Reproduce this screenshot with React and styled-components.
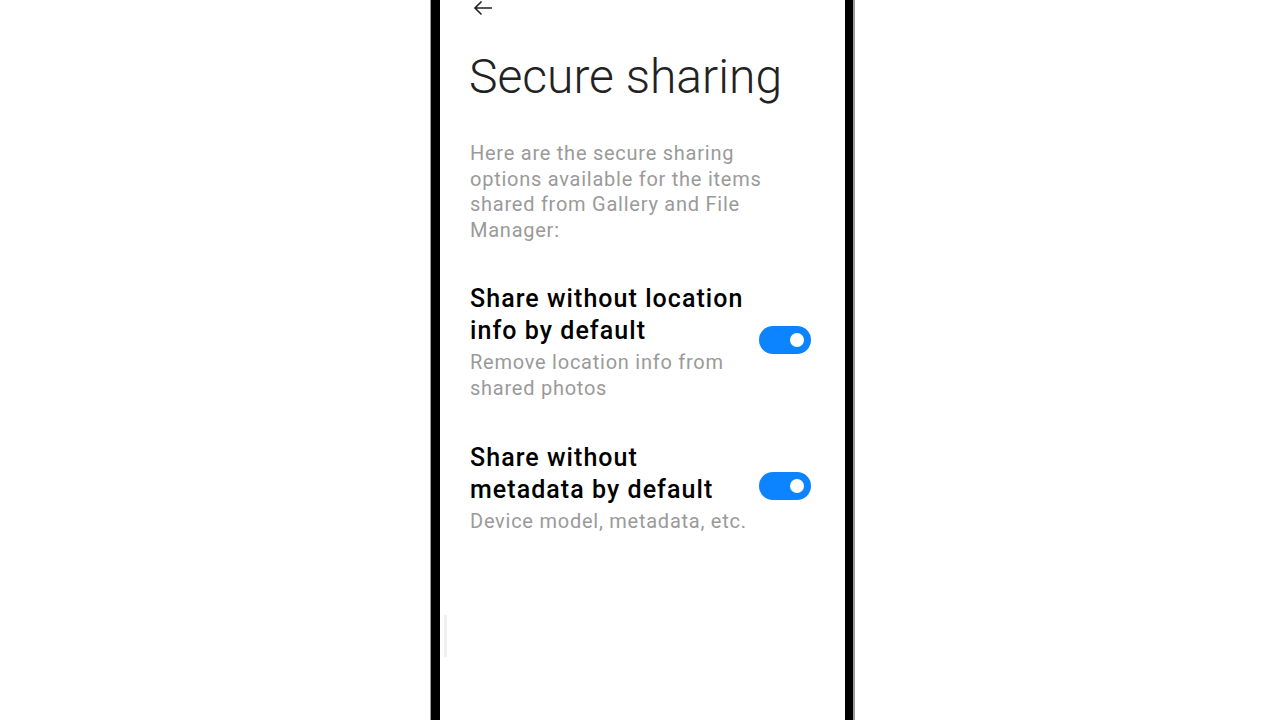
import React from 'react';
import styled, { createGlobalStyle } from 'styled-components';

const GlobalStyle = createGlobalStyle`
  html, body {
    margin: 0;
    padding: 0;
    background: #ffffff;
    font-family: Roboto, "Noto Sans", sans-serif;
  }
`;

const Page = styled.div`
  height: 720px;
  overflow: hidden;
  display: flex;
  justify-content: center;
  padding-left: 5px;
`;

const Frame = styled.div`
  height: 720px;
  background: #9c9c9c;
  padding: 0 2px 0 1px;
  display: flex;
`;

const Bezel = styled.div`
  background: #000;
  padding: 0 8px 0 9px;
  display: flex;
`;

const Screen = styled.div`
  position: relative;
  width: 405px;
  background: #fff;
  padding: 0 34px 0 30px;
  box-sizing: border-box;
`;

const BackButton = styled.div`
  height: 16px;
  padding-left: 3px;
  color: #222;
  display: flex;
  align-items: center;
`;

const Title = styled.h1`
  margin: 35px 0 0 -1px;
  font-size: 48px;
  font-weight: 300;
  line-height: 52px;
  color: #222;
`;

const Intro = styled.p`
  margin: 38px 0 0;
  width: 310px;
  font-size: 20px;
  line-height: 25.5px;
  letter-spacing: 0.75px;
  color: #9a9a9a;
`;

const Item = styled.div`
  display: flex;
  align-items: center;
  justify-content: space-between;
  margin-top: ${(p) => p.$top}px;
`;

const ItemText = styled.div`
  width: 285px;
`;

const ItemTitle = styled.div`
  font-size: 25px;
  font-weight: 500;
  line-height: 32px;
  letter-spacing: 1.05px;
  color: #000;
`;

const ItemSub = styled.div`
  margin-top: 3px;
  font-size: 20px;
  line-height: 25.5px;
  letter-spacing: 0.75px;
  color: #9a9a9a;
`;

const Toggle = styled.div`
  width: 52px;
  height: 28px;
  border-radius: 14px;
  background: #0d84ff;
  position: relative;
  flex-shrink: 0;
  margin-bottom: ${(p) => p.$lift}px;
  &::after {
    content: '';
    position: absolute;
    width: 14px;
    height: 14px;
    border-radius: 50%;
    background: #fff;
    top: 7px;
    right: 7px;
  }
`;

const ScrollHint = styled.div`
  position: absolute;
  left: 4px;
  top: 615px;
  width: 3px;
  height: 42px;
  background: #f0f0f0;
`;

function App() {
  return (
    <>
      <GlobalStyle />
      <Page>
        <Frame>
          <Bezel>
            <Screen>
              <BackButton>
                <svg width="20" height="16" viewBox="0 0 20 16" fill="none">
                  <path d="M19 8H2M8.5 1.5L2 8l6.5 6.5" stroke="#222" strokeWidth="1.6" />
                </svg>
              </BackButton>
              <Title>Secure sharing</Title>
              <Intro>
                Here are the secure sharing options available for the items shared from Gallery and File Manager:
              </Intro>
              <Item $top={40}>
                <ItemText>
                  <ItemTitle>Share without location info by default</ItemTitle>
                  <ItemSub>Remove location info from shared photos</ItemSub>
                </ItemText>
                <Toggle $lift={4} />
              </Item>
              <Item $top={41}>
                <ItemText>
                  <ItemTitle>Share without metadata by default</ItemTitle>
                  <ItemSub>Device model, metadata, etc.</ItemSub>
                </ItemText>
                <Toggle $lift={4} />
              </Item>
              <ScrollHint />
            </Screen>
          </Bezel>
        </Frame>
      </Page>
    </>
  );
}

export default App;
